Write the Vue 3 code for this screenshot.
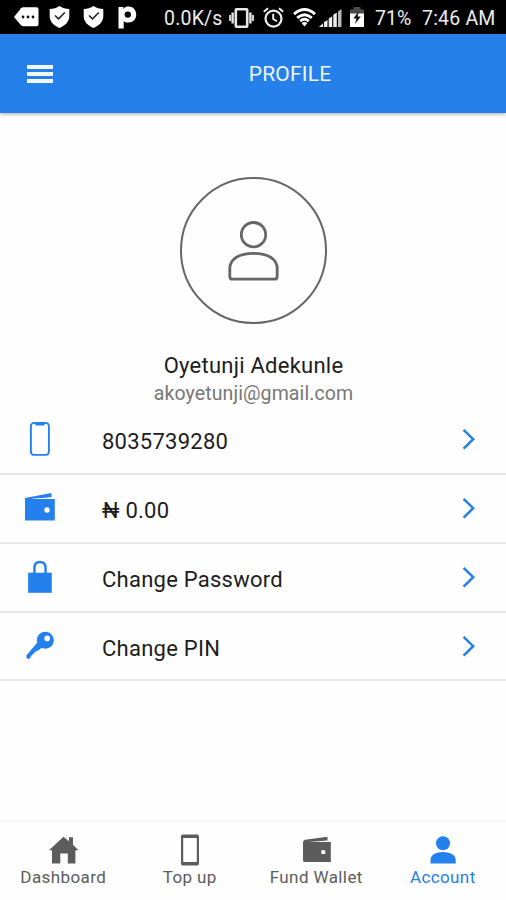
<script setup>
const rows = [
  { icon: 'phone', label: '8035739280' },
  { icon: 'wallet', label: '₦ 0.00' },
  { icon: 'lock', label: 'Change Password' },
  { icon: 'key', label: 'Change PIN' },
]
const tabs = [
  { icon: 'home', label: 'Dashboard' },
  { icon: 'device', label: 'Top up' },
  { icon: 'wallet', label: 'Fund Wallet' },
  { icon: 'person', label: 'Account', active: true },
]
</script>

<template>
  <div class="screen">
    <div class="status">
      <svg class="s-msg" width="25" height="20" viewBox="0 0 25 20">
        <path d="M0 10L7 1.2Q8 .3 9.3 .3H22.5Q24.5 .3 24.5 2.3V17.2Q24.5 19.2 22.5 19.2H9.3Q8 19.2 7 18.2Z" fill="#fff" />
        <g fill="#111"><circle cx="9" cy="10" r="1.4" /><circle cx="14" cy="10" r="1.4" /><circle cx="19" cy="10" r="1.4" /></g>
      </svg>
      <svg v-for="n in 2" :key="n" class="s-shield" width="21" height="22" viewBox="0 0 21 22">
        <path d="M10.5 0C8 2 4 3 .7 3V10C.7 15.5 4.5 19.5 10.5 22C16.5 19.5 20.3 15.5 20.3 10V3C17 3 13 2 10.5 0Z" fill="#fff" />
        <path d="M6 9.5L9.5 12.8L15.8 6.5" fill="none" stroke="#222" stroke-width="1.6" />
      </svg>
      <svg class="s-pay" width="19" height="23" viewBox="0 0 19 23">
        <path d="M.5 1H5.5V3C7 1 8.5 .5 10.5 .5C15 .5 18.2 3.8 18.2 8.5C18.2 13.3 15 16.5 10.5 16.5C8 16.5 6.8 16 5.7 15V22.5H.5Z" fill="#fff" />
        <circle cx="9.8" cy="8.6" r="3.2" fill="#000" />
      </svg>
      <span class="speed">0.0K/s</span>
      <svg class="s-vib" width="25" height="20" viewBox="0 0 25 20" fill="none" stroke="#e8e8e8">
        <rect x="6.8" y="1.2" width="11.4" height="17.6" rx="1" stroke-width="2.6" />
        <path d="M3.6 4.5V15.5M21.4 4.5V15.5" stroke-width="2.4" /><path d="M1 7V13M24 7V13" stroke-width="1.8" />
      </svg>
      <svg class="s-alarm" width="21" height="21" viewBox="0 0 21 21" fill="none" stroke="#eee">
        <circle cx="10.5" cy="11.6" r="8" stroke-width="2.2" /><path d="M10.2 6.8V12L14 14.3" stroke-width="1.9" />
        <path d="M.8 4.8L5 1.2M20.2 4.8L16 1.2" stroke-width="2" />
      </svg>
      <svg class="s-wifi" width="23" height="19" viewBox="0 0 23 19" fill="none" stroke="#fff" stroke-width="2.9">
        <path d="M1 6.2Q11.5 -3 22 6.2M4.2 9.8Q11.5 3.5 18.8 9.8M7.2 13.2Q11.5 9.5 15.8 13.2" /><path d="M8.6 15Q11.5 12.8 14.4 15L11.5 18.4Z" fill="#fff" stroke="none" />
      </svg>
      <svg class="s-signal" width="23" height="18" viewBox="0 0 23 18">
        <g fill="#eee"><path d="M0 18L4 14.2V18Z" /><path d="M5 13L8.5 11V18H5Z" /><path d="M9.7 9.5L13.2 7.2V18H9.7Z" /><path d="M14.3 5.5L17.8 3.7V18H14.3Z" /></g>
        <path d="M19 2.5L22.5 0V18H19Z" fill="#bbb" />
      </svg>
      <svg class="s-batt" width="14" height="20" viewBox="0 0 14 20">
        <path d="M3.5 0H10.5V2.5H14V7H0V2.5H3.5Z" fill="#4b4b4b" /><path d="M0 6.5H14V20H0Z" fill="#fff" />
        <path d="M8.8 4L3.4 11.5H6.4L5 17L10.8 9.4H7.6Z" fill="#111" />
      </svg>
      <span class="pct">71%</span>
      <span class="time">7:46 AM</span>
    </div>

    <header class="bar">
      <div class="burger"><i /><i /><i /></div>
      <h1>PROFILE</h1>
    </header>

    <main>
      <section class="profile">
        <div class="avatar">
          <svg width="52" height="62" viewBox="0 0 52 62" fill="none" stroke="#666" stroke-width="2.8">
            <circle cx="26.5" cy="14.7" r="12.2" />
            <path d="M2.8 56.4V48.7C2.8 38.7 12.5 33.4 26.5 33.4S50.2 38.7 50.2 48.7V56.4Q50.2 59.2 47.4 59.2H5.6Q2.8 59.2 2.8 56.4Z" />
          </svg>
        </div>
        <div class="name">Oyetunji Adekunle</div>
        <div class="email">akoyetunji@gmail.com</div>
      </section>

      <ul class="list">
        <li v-for="row in rows" :key="row.label">
          <span class="lead">
            <svg v-if="row.icon === 'phone'" width="34" height="36" viewBox="0 0 34 36">
              <rect x="7.9" y="1.9" width="18" height="32" rx="3.2" fill="none" stroke="#2480ec" stroke-width="1.9" />
              <path d="M11.5 1.4H22.5L21.5 3.9Q21 4.6 20 4.6H14Q13 4.6 12.5 3.9Z" fill="#2480ec" />
            </svg>
            <svg v-else-if="row.icon === 'wallet'" width="34" height="36" viewBox="0 0 34 36">
              <path d="M2 8.1L28.5 3.1V7.4L8 9H31.8V30.6H2Z" fill="#2480ec" />
              <path d="M7.5 9.1L29 7.2V9.1Z" fill="#fff" />
              <circle cx="24" cy="20" r="2.7" fill="#fff" />
            </svg>
            <svg v-else-if="row.icon === 'lock'" width="34" height="36" viewBox="0 0 34 36">
              <path d="M5.1 13.7H28.8V33.8H5.1Z" fill="#2480ec" />
              <path d="M11.4 14V8.9C11.4 5.3 13.5 3 17 3S22.6 5.3 22.6 8.9V14" fill="none" stroke="#2480ec" stroke-width="2.4" />
            </svg>
            <svg v-else width="34" height="36" viewBox="0 0 34 36">
              <circle cx="22.3" cy="12.2" r="8.5" fill="#2480ec" /><circle cx="24.2" cy="10.4" r="2.8" fill="#fff" />
              <path d="M14.5 14.2L3.5 27.2V30L6 31.2L8.6 27.4L12.5 23.6L15.2 22.6L19.5 18.9Z" fill="#2480ec" />
            </svg>
          </span>
          <span class="label">{{ row.label }}</span>
          <svg class="chev" width="14" height="22" viewBox="0 0 14 22"><path d="M1.6 1.9L11.2 11.2L1.6 20.7" fill="none" stroke="#2480e4" stroke-width="2.5" /></svg>
        </li>
      </ul>
    </main>

    <nav class="tabs">
      <div v-for="tab in tabs" :key="tab.label" class="tab" :class="{ active: tab.active }">
        <svg width="32" height="32" viewBox="0 0 32 32" fill="currentColor">
          <path v-if="tab.icon === 'home'" d="M16.5 2.8L22 7.3V3.2H26V10.8L31.5 16.3H28.4V29.5H20.8V19.5H13.3V29.5H5V16.3H2Z" />
          <path v-else-if="tab.icon === 'device'" fill-rule="evenodd" d="M8.5 .5H23Q25 .5 25 2.5V29.5Q25 31.5 23 31.5H8.5Q7 31.5 7 29.5V2.5Q7 .5 8.5 .5ZM9.2 4V28H22.8V4Z" />
          <path v-else-if="tab.icon === 'wallet'" fill-rule="evenodd" d="M3 8.2Q3 6.4 5 5.8L27.5 2.7V6.5L8 7.9H30.8V28H4.5Q3 28 3 26.5ZM21.4 16.2V20H25.2V16.2Z" />
          <g v-else><circle cx="16" cy="9.2" r="7" /><path d="M3.5 29.5V26C3.5 20.8 9 18 16 18S28.7 20.8 28.7 26V29.5Z" /></g>
        </svg>
        <span>{{ tab.label }}</span>
      </div>
    </nav>
  </div>
</template>

<style>
body { margin: 0; background: #fefefe; }
</style>

<style scoped>
.screen { display: flex; flex-direction: column; width: 506px; height: 900px; overflow: hidden; background: #fefefe; font-family: Roboto, "Noto Sans", sans-serif; color: #1c1c1c; }
svg { display: block; flex: none; }
.status { display: flex; align-items: flex-start; box-sizing: border-box; flex: none; height: 34px; padding-left: 14px; background: #000; color: #ededed; font-size: 19.5px; line-height: 22px; white-space: nowrap; }
.status span { flex: none; padding-top: 8px; }
.s-msg { margin: 7px 10px 0 0; }
.s-shield { margin: 6px 13px 0 0; }
.s-shield + .s-pay { margin: 6px 0 0 1px; }
.speed { width: 65px; margin-left: 27px; letter-spacing: .2px; }
.s-vib { margin: 8px 9px 0 0; }
.s-alarm { margin: 7px 9px 0 0; }
.s-wifi { margin: 8px 3px 0 0; }
.s-signal { margin: 9px 8px 0 0; }
.s-batt { margin: 7px 11px 0 0; }
.pct { width: 47px; }
.time { letter-spacing: .2px; }

.bar { position: relative; z-index: 1; display: grid; grid-template-columns: 74px 1fr; align-items: center; flex: none; height: 79px; background: #2680e9; box-shadow: 0 1px 4px rgba(0, 0, 0, .35); }
.burger { display: flex; flex-direction: column; gap: 3px; width: 26px; padding: 0 0 0 27px; }
.burger i { height: 4px; background: #f2f7ff; }
h1 { margin: 0; color: #eff6ff; font-size: 21px; font-weight: 400; line-height: 24px; text-align: center; letter-spacing: .2px; }

main { flex: 1; }
.profile { display: flex; flex-direction: column; align-items: center; height: 293px; }
.avatar { display: flex; align-items: center; justify-content: center; box-sizing: border-box; width: 147px; height: 147px; margin-top: 64px; border: 2px solid #666; border-radius: 50%; }
.name { margin-top: 27px; padding-left: 1px; font-size: 22px; line-height: 30px; letter-spacing: .25px; }
.email { padding-left: 1px; font-size: 19.5px; line-height: 25px; letter-spacing: .1px; color: #777; }

.list { margin: 0; padding: 0; list-style: none; }
.list li { display: flex; align-items: center; box-sizing: border-box; height: 69px; padding: 0 30px 2px 23px; border-bottom: 2px solid #e6e6e6; }
.list li:last-child { height: 68px; padding-bottom: 1px; }
.lead { width: 79px; }
.label { flex: 1; padding-top: 6px; font-size: 22px; line-height: 28px; letter-spacing: .25px; white-space: nowrap; }

.tabs { display: grid; grid-template-columns: repeat(4, 1fr); flex: none; box-sizing: border-box; height: 80px; border-top: 2px solid #f5f5f5; }
.tab { display: flex; flex-direction: column; align-items: center; padding-top: 12px; color: #5c5c5c; font-size: 17px; line-height: 22px; letter-spacing: .4px; }
.tab.active { color: #2480ec; }
</style>
